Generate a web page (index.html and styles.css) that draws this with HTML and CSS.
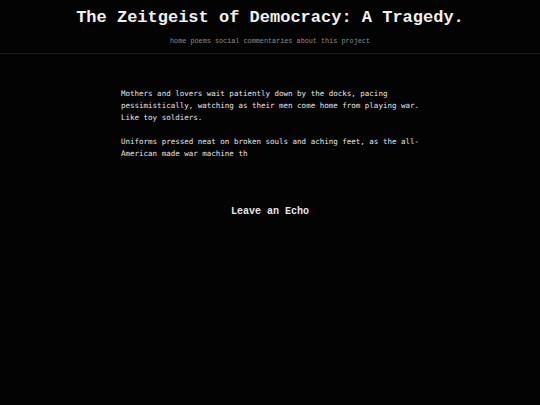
FILE: index.html
```html
<!DOCTYPE html>
<html>
<head>
<meta charset="utf-8">
<link rel="stylesheet" href="styles.css">
</head>
<body>
<header class="site-header">
  <h1 class="site-title">The Zeitgeist of Democracy: A Tragedy.</h1>
  <nav class="site-nav">
    <a href="#">home</a> <a href="#">poems</a> <a href="#">social commentaries</a> <a href="#">about this project</a>
  </nav>
</header>
<main class="content">
  <article class="post">
    <p>Mothers and lovers wait patiently down by the docks, pacing pessimistically, watching as their men come home from playing war. Like toy soldiers.</p>
    <p>Uniforms pressed neat on broken souls and aching feet, as the all-American made war machine th</p>
  </article>
  <h2 class="echo">Leave an Echo</h2>
</main>
</body>
</html>
```
FILE: styles.css
```css
html, body {
  margin: 0;
  padding: 0;
  background: #030303;
  height: 100%;
}
body {
  color: #e0e0e0;
}
.site-header {
  text-align: center;
  border-bottom: 1px solid #1c1c1c;
  padding-top: 8px;
  padding-bottom: 8px;
}
.site-title {
  margin: 0;
  font-family: "Liberation Mono", "Courier New", monospace;
  font-weight: bold;
  font-size: 17px;
  line-height: 20px;
  color: #f0f0f0;
}
.site-nav {
  margin-top: 9px;
  font-family: "Liberation Mono", "Courier New", monospace;
  font-size: 6.8px;
  line-height: 8px;
}
.site-nav a {
  color: #8c8c8c;
  text-decoration: none;
}
.content {
  width: 298px;
  margin: 0 auto;
  padding-top: 34px;
}
.post p {
  margin: 0 0 12px 0;
  font-family: "DejaVu Sans Mono", monospace;
  font-size: 7.5px;
  line-height: 12px;
  color: #e6e6e6;
}
.echo {
  margin: 46px 0 0 0;
  text-align: center;
  font-family: "Liberation Mono", "Courier New", monospace;
  font-weight: bold;
  font-size: 10px;
  line-height: 12px;
  color: #e6e6e6;
}
```
